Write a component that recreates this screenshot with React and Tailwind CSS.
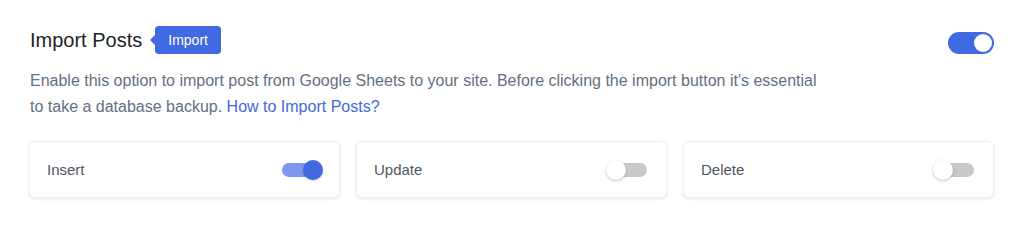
const options = [
  { label: 'Insert', on: true },
  { label: 'Update', on: false },
  { label: 'Delete', on: false },
]

function SmallSwitch({ on }) {
  return (
    <span className="relative block w-[44px] h-[20px] shrink-0">
      <span
        className={
          'absolute left-[3px] top-[3px] w-[38px] h-[14px] rounded-full ' +
          (on ? 'bg-[#7c97ec]' : 'bg-[#c9c9c9]')
        }
      />
      <span
        className={
          'absolute top-0 w-[20px] h-[20px] rounded-full ' +
          (on
            ? 'left-[24px] bg-[#4169e1] shadow-[0_1px_2px_rgba(0,0,0,0.2)]'
            : 'left-0 bg-white shadow-[0_1px_3px_rgba(0,0,0,0.25)]')
        }
      />
    </span>
  )
}

export default function App() {
  return (
    <div className="w-[1024px] h-[224px] bg-white px-[30px] pt-[26px] font-['Liberation_Sans',Arial,sans-serif]">
      {/* Header */}
      <div className="flex items-start justify-between">
        <div className="flex items-center h-[28px]">
          <h2 className="text-[20px] leading-[28px] text-[#1d2327]">Import Posts</h2>
          <span className="relative ml-[13px] h-[28px] px-[13px] flex items-center rounded-[4px] bg-[#4169e1] text-white text-[14px]">
            <span className="absolute left-[-5px] top-1/2 -translate-y-1/2 w-0 h-0 border-y-[5px] border-y-transparent border-r-[5px] border-r-[#4169e1]" />
            Import
          </span>
        </div>
        <span className="relative mt-[6px] w-[46px] h-[22px] rounded-full bg-[#4169e1]">
          <span className="absolute right-[2px] top-[2px] w-[18px] h-[18px] rounded-full bg-white" />
        </span>
      </div>

      {/* Description */}
      <p className="mt-[14px] max-w-[790px] text-[16px] leading-[26px] text-[#646f7f]">
        Enable this option to import post from Google Sheets to your site. Before clicking the import button it's essential to take a database backup.{' '}
        <a href="#" className="text-[#3f68e0]">How to Import Posts?</a>
      </p>

      {/* Options */}
      <div className="mt-[21px] grid grid-cols-3 gap-[16px] ml-[-1px]">
        {options.map((o) => (
          <div
            key={o.label}
            className="h-[57px] flex items-center justify-between pl-[17px] pr-[16px] bg-white rounded-[6px] border border-[#eef0f3] shadow-[0_1px_3px_rgba(30,50,90,0.12)]"
          >
            <span className="mt-[2px] text-[15px] text-[#50575e]">{o.label}</span>
            <SmallSwitch on={o.on} />
          </div>
        ))}
      </div>
    </div>
  )
}
